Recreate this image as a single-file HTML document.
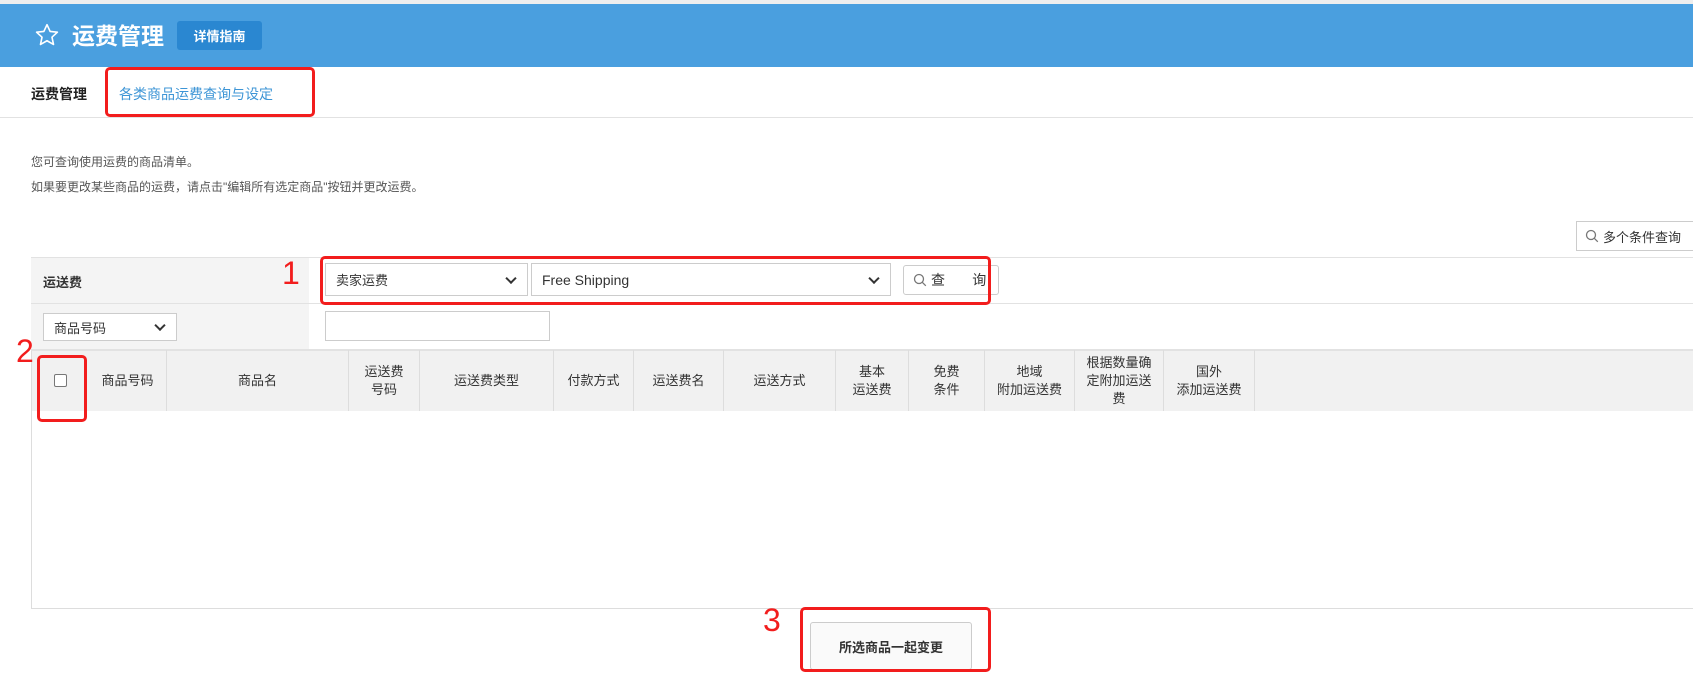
<!DOCTYPE html>
<html><head><meta charset="utf-8"><style>
*{box-sizing:border-box;margin:0;padding:0}
body{width:1693px;height:693px;background:#fff;font-family:"Liberation Sans","Noto Sans CJK SC",sans-serif;color:#333;position:relative;overflow:hidden;font-size:13px}
.a{position:absolute}
.hdr{left:0;top:4px;width:1693px;height:63px;background:#4a9fdf}
.red{border:3px solid #f21d1d;border-radius:5px}
.sel{background:#fff;border:1px solid #ccc;font-size:13px;color:#333;display:flex;align-items:center;padding-left:10px}
.sel:after{content:"";position:absolute;right:12px;top:50%;width:6px;height:6px;border-right:2px solid #333;border-bottom:2px solid #333;transform:translateY(-70%) rotate(45deg)}
.th{top:350px;height:61px;border-right:1px solid #ddd;display:flex;align-items:center;justify-content:center;text-align:center;font-size:13px;color:#333;line-height:18px}
.num{color:#f21d1d;font-size:32px;font-family:"Liberation Sans",sans-serif}
</style></head><body>
<div class="a" style="left:0;top:0;width:1693px;height:4px;background:#eee"></div>
<div class="a hdr"></div>
<svg class="a" style="left:34px;top:22px" width="26" height="26" viewBox="0 0 24 24"><path d="M12 2.5l2.9 6.2 6.7.7-5 4.6 1.4 6.7L12 17.3l-6 3.4 1.4-6.7-5-4.6 6.7-.7z" fill="none" stroke="#fff" stroke-width="1.5" stroke-linejoin="round"/></svg>
<div class="a" style="left:72px;top:17px;font-size:23px;font-weight:bold;color:#fff">运费管理</div>
<div class="a" style="left:177px;top:21px;width:85px;height:29px;background:#2a87d1;border-radius:3px;color:#fff;font-size:13px;font-weight:bold;display:flex;align-items:center;justify-content:center">详情指南</div>
<div class="a" style="left:31px;top:84px;font-size:14px;font-weight:bold;color:#222">运费管理</div>
<div class="a" style="left:119px;top:84px;font-size:14px;color:#3d95d6">各类商品运费查询与设定</div>
<div class="a red" style="left:105px;top:67px;width:210px;height:50px"></div>
<div class="a" style="left:0;top:117px;width:1693px;height:1px;background:#e2e2e2"></div>
<div class="a" style="left:31px;top:153px;font-size:12px;color:#555">您可查询使用运费的商品清单。</div>
<div class="a" style="left:31px;top:178px;font-size:12px;color:#555">如果要更改某些商品的运费，请点击"编辑所有选定商品"按钮并更改运费。</div>
<div class="a" style="left:1576px;top:221px;width:120px;height:30px;border:1px solid #ccc;display:flex;align-items:center;padding-left:8px;font-size:13px"><svg width="14" height="14" viewBox="0 0 14 14" style="margin-right:4px"><circle cx="6" cy="6" r="4.5" fill="none" stroke="#777" stroke-width="1.3"/><path d="M9.3 9.3l3.5 3.5" stroke="#777" stroke-width="1.3"/></svg>多个条件查询</div>
<div class="a" style="left:31px;top:257px;width:1662px;height:1px;background:#e2e2e2"></div>
<div class="a" style="left:31px;top:258px;width:278px;height:91px;background:#f4f4f4"></div>
<div class="a" style="left:31px;top:303px;width:1662px;height:1px;background:#e2e2e2"></div>
<div class="a" style="left:43px;top:272px;font-size:13px;font-weight:bold;color:#333">运送费</div>
<div class="a num" style="left:282px;top:255px">1</div>
<div class="a sel" style="left:325px;top:263px;width:203px;height:33px">卖家运费</div>
<div class="a sel" style="left:531px;top:263px;width:360px;height:33px;font-size:14px">Free Shipping</div>
<div class="a" style="left:903px;top:265px;width:96px;height:30px;border:1px solid #ccc;border-radius:3px;display:flex;align-items:center;padding-left:9px;font-size:14px"><svg width="14" height="14" viewBox="0 0 14 14" style="margin-right:4px"><circle cx="6" cy="6" r="4.5" fill="none" stroke="#777" stroke-width="1.3"/><path d="M9.3 9.3l3.5 3.5" stroke="#777" stroke-width="1.3"/></svg>查&nbsp;&nbsp;&nbsp;&nbsp;&nbsp;&nbsp;&nbsp;询</div>
<div class="a red" style="left:320px;top:256px;width:671px;height:49px"></div>
<div class="a sel" style="left:43px;top:313px;width:134px;height:28px">商品号码</div>
<div class="a" style="left:325px;top:311px;width:225px;height:30px;border:1px solid #ccc;background:#fff"></div>
<div class="a" style="left:31px;top:349px;width:1662px;height:2px;background:#e2e2e2"></div>
<div class="a" style="left:31px;top:351px;width:1662px;height:60px;background:#f1f1f1"></div>
<div class="a" style="left:31px;top:351px;width:1px;height:257px;background:#ddd"></div>
<div class="a" style="left:31px;top:608px;width:1662px;height:1px;background:#ddd"></div>
<div class="a th" style="left:31px;width:58px;border-right:none"><div style="width:13px;height:13px;border:1px solid #777;border-radius:2px;background:#fff"></div></div>
<div class="a th" style="left:89px;width:78px">商品号码</div>
<div class="a th" style="left:167px;width:182px">商品名</div>
<div class="a th" style="left:349px;width:71px">运送费<br>号码</div>
<div class="a th" style="left:420px;width:134px">运送费类型</div>
<div class="a th" style="left:554px;width:80px">付款方式</div>
<div class="a th" style="left:634px;width:90px">运送费名</div>
<div class="a th" style="left:724px;width:112px">运送方式</div>
<div class="a th" style="left:836px;width:73px">基本<br>运送费</div>
<div class="a th" style="left:909px;width:76px">免费<br>条件</div>
<div class="a th" style="left:985px;width:90px">地域<br>附加运送费</div>
<div class="a th" style="left:1075px;width:89px">根据数量确<br>定附加运送<br>费</div>
<div class="a th" style="left:1164px;width:91px">国外<br>添加运送费</div>
<div class="a num" style="left:16px;top:333px">2</div>
<div class="a red" style="left:37px;top:355px;width:50px;height:67px"></div>
<div class="a" style="left:810px;top:622px;width:162px;height:48px;border:1px solid #ccc;border-radius:3px;background:#fafafa;display:flex;align-items:center;justify-content:center;font-size:13px;font-weight:bold">所选商品一起变更</div>
<div class="a num" style="left:763px;top:602px">3</div>
<div class="a red" style="left:800px;top:607px;width:191px;height:65px"></div>
</body></html>
